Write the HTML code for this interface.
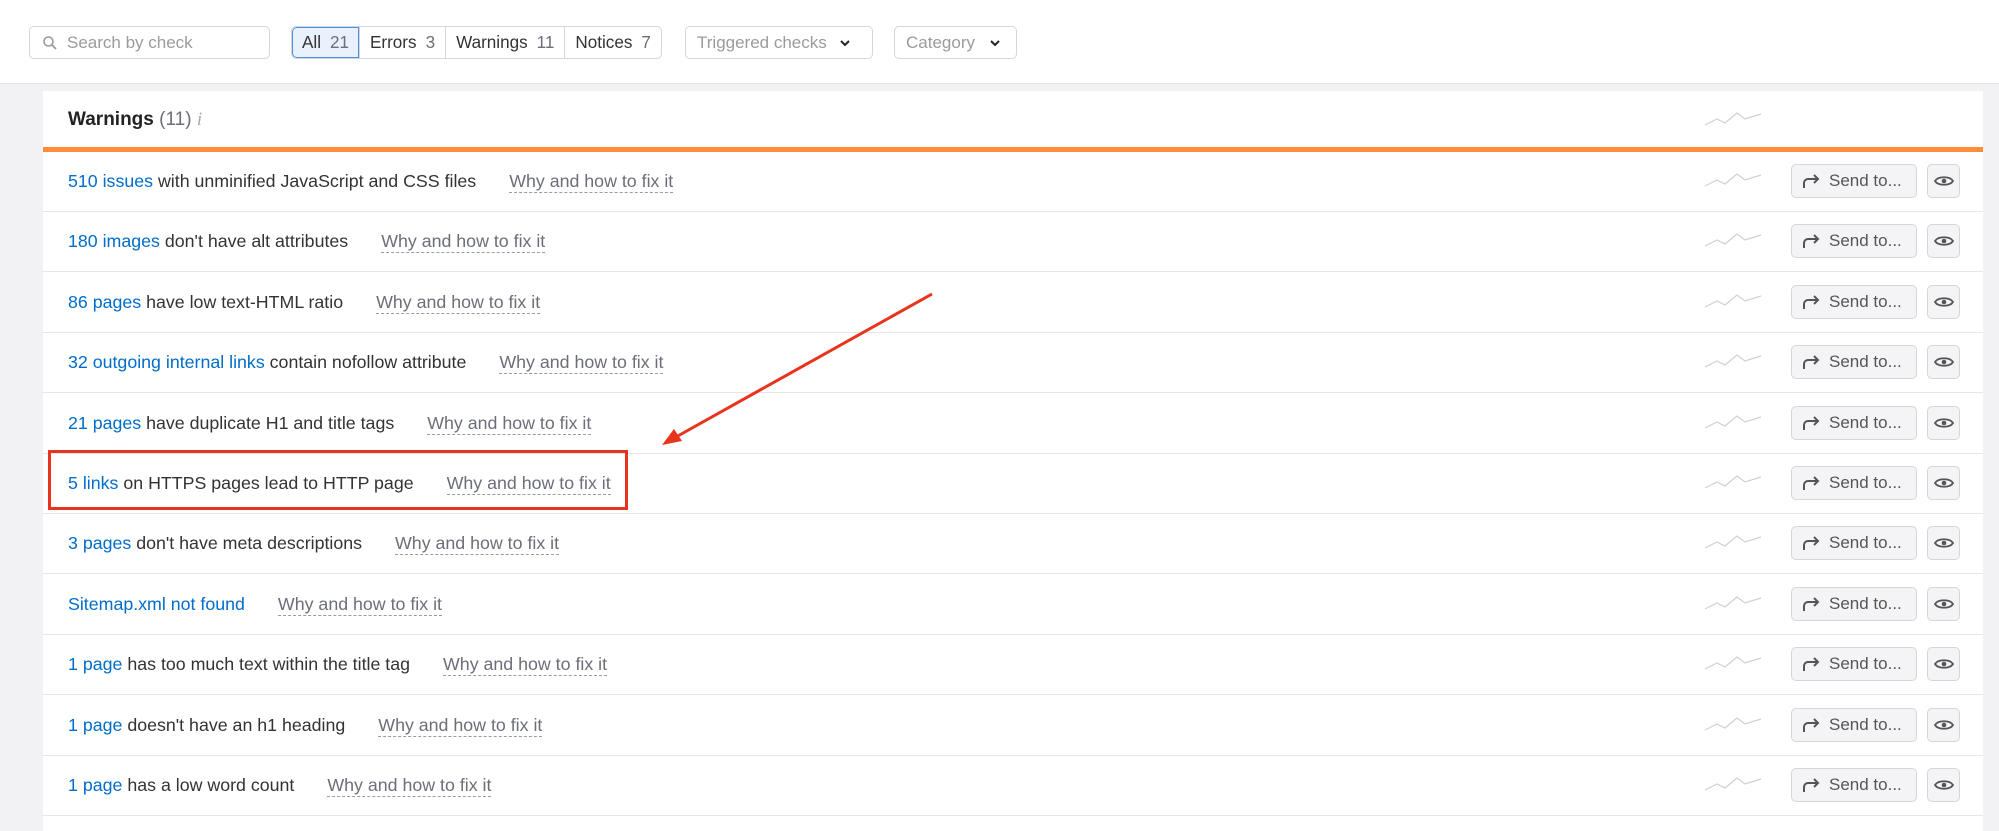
<!DOCTYPE html>
<html><head><meta charset="utf-8"><style>
*{box-sizing:border-box;margin:0;padding:0}
body{width:1999px;height:827px;overflow:hidden;background:#f2f2f4;font-family:"Liberation Sans",Arial,sans-serif;position:relative}
.top{position:absolute;left:0;top:0;width:1999px;height:84px;background:#fff;border-bottom:1px solid #e6e6e8}
.box{position:absolute;top:26px;height:33px;border:1px solid #d5d6da;border-radius:5px;background:#fff;font-size:17px;color:#9a9ba1;display:flex;align-items:center}
.tabs{position:absolute;left:291px;top:26px;height:33px;display:flex;border:1px solid #d5d6da;border-radius:5px;overflow:hidden;background:#fff}
.tab{display:flex;align-items:center;padding:0 10px;font-size:17.1px;color:#333;border-right:1px solid #d5d6da}
.tab:last-child{border-right:none}
.tab span{color:#6c6e79;margin-left:9px}
.tab.act{background:#e8f1fc;box-shadow:inset 0 0 0 1px #4a8fe0;border-radius:5px 0 0 5px}
.card{position:absolute;left:43px;top:91px;width:1940px;height:740px;background:#fff}
.hdr{position:absolute;left:0;top:0;width:1940px;height:56px}
.hdr b{position:absolute;left:25px;top:18px;font-size:19px;color:#222}
.hdr .c{font-weight:normal;color:#6c6e79}
.orange{position:absolute;left:0;top:56px;width:1940px;height:5px;background:#ff8c38}
.row{position:absolute;left:0;width:1940px;height:60px;border-bottom:1px solid #e6e6e8;font-size:17.8px;color:#333}
.row .t{position:absolute;left:25px;top:19px;white-space:nowrap}
.row a{color:#006dca;text-decoration:none}
.row .w{color:#6c6e79;border-bottom:1px dashed #9a9ba1;margin-left:33px;padding-bottom:1px}
.spark{position:absolute;left:1660px;top:18px}
.send{position:absolute;left:1748px;top:12px;width:126px;height:34px;border:1px solid #d5d6da;border-radius:5px;background:#f4f4f6;color:#555;font-size:17px;display:flex;align-items:center;padding-left:9px}
.eye{position:absolute;left:1884px;top:12px;width:33px;height:34px;border:1px solid #d5d6da;border-radius:5px;background:#f4f4f6;display:flex;align-items:center;justify-content:center}
.red{position:absolute;left:48px;top:450px;width:580px;height:60px;border:3px solid #e8341c}
</style></head><body>
<div class="top">
 <div class="box" style="left:29px;width:241px;padding-left:12px">
  <svg width="16" height="16" viewBox="0 0 16 16" style="margin-right:9px"><circle cx="6.5" cy="6.5" r="4.5" fill="none" stroke="#9a9ba1" stroke-width="1.6"/><path d="M10 10l4 4" stroke="#9a9ba1" stroke-width="1.8"/></svg>Search by check</div>
 <div class="tabs">
  <div class="tab act">All<span>21</span></div>
  <div class="tab">Errors<span>3</span></div>
  <div class="tab">Warnings<span>11</span></div>
  <div class="tab">Notices<span>7</span></div>
 </div>
 <div class="box" style="left:685px;width:188px;padding-left:11px">Triggered checks<svg width="12" height="8" viewBox="0 0 12 8" style="margin-left:12px"><path d="M2 2l4 4 4-4" fill="none" stroke="#222" stroke-width="2"/></svg></div>
 <div class="box" style="left:894px;width:123px;padding-left:11px">Category<svg width="12" height="8" viewBox="0 0 12 8" style="margin-left:14px"><path d="M2 2l4 4 4-4" fill="none" stroke="#222" stroke-width="2"/></svg></div>
</div>
<div class="card">
 <div class="hdr"><b>Warnings <span class="c">(11)</span> <i style="font-weight:normal;color:#aaa;font-family:'Liberation Serif',serif">i</i></b>
  <svg class="spark" width="60" height="20" viewBox="0 0 60 20"><path d="M2 16l12-6 8 4 12-10 8 6 16-5" fill="none" stroke="#d0d0d0" stroke-width="1.2"/></svg></div>
 <div class="orange"></div>
</div>
<div id="rows"></div>
<div class="red"></div>
<svg style="position:absolute;left:0;top:0" width="1999" height="827"><path d="M932 294L676 437" stroke="#e8341c" stroke-width="3"/><path d="M662 445l12-16 8 12z" fill="#e8341c"/></svg>
<script>
var d=[["510 issues"," with unminified JavaScript and CSS files"],["180 images"," don't have alt attributes"],["86 pages"," have low text-HTML ratio"],["32 outgoing internal links"," contain nofollow attribute"],["21 pages"," have duplicate H1 and title tags"],["5 links"," on HTTPS pages lead to HTTP page"],["3 pages"," don't have meta descriptions"],["Sitemap.xml not found",""],["1 page"," has too much text within the title tag"],["1 page"," doesn't have an h1 heading"],["1 page"," has a low word count"]];
var h="";d.forEach(function(r,i){var y=152+i*60.4;
h+='<div class="row" style="left:43px;top:'+y+'px"><div class="t"><a>'+r[0]+'</a>'+r[1]+'<span class="w">Why and how to fix it</span></div>'+
'<svg class="spark" width="60" height="20" viewBox="0 0 60 20"><path d="M2 16l12-6 8 4 12-10 8 6 16-5" fill="none" stroke="#d0d0d0" stroke-width="1.2"/></svg>'+
'<div class="send"><svg width="20" height="18" viewBox="0 0 20 18" style="margin-right:8px"><path d="M3 16V11a4 4 0 0 1 4-4h10M13 3l4 4-4 4" fill="none" stroke="#555" stroke-width="2"/></svg>Send to...</div>'+
'<div class="eye"><svg width="20" height="14" viewBox="0 0 20 14"><path d="M1 7C4 2 16 2 19 7C16 12 4 12 1 7z" fill="none" stroke="#555" stroke-width="1.8"/><circle cx="10" cy="7" r="2.3" fill="#555"/></svg></div></div>';});
document.getElementById("rows").innerHTML=h;
</script>
</body></html>
